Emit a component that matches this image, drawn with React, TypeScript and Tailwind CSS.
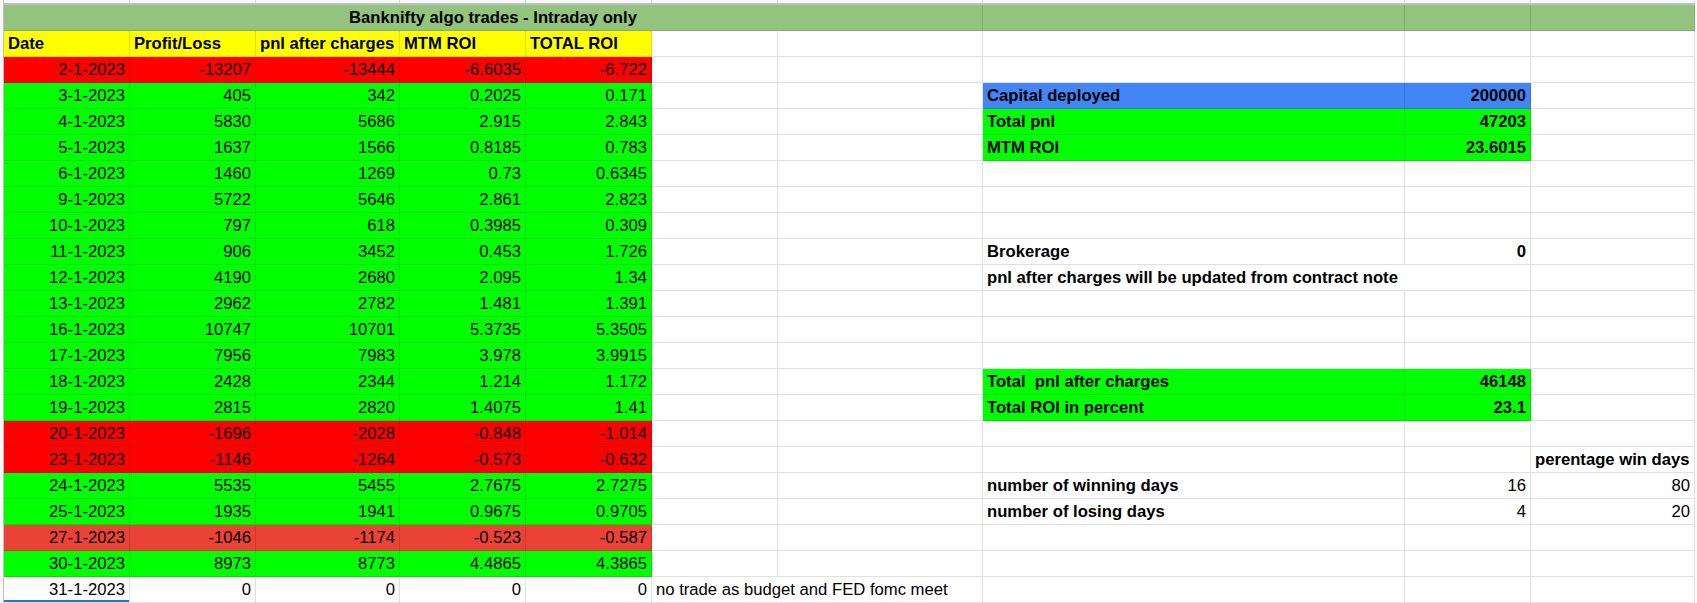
import React from 'react';

type Trade = [string, string, string, string, string, string];

const fills: { [key: string]: string } = {
  red: 'bg-[#ff0000]',
  green: 'bg-[#00ff00]',
  loss: 'bg-[#ea4335]',
  none: '',
};

const trades: Trade[] = [
  ['2-1-2023', '-13207', '-13444', '-6.6035', '-6.722', 'red'],
  ['3-1-2023', '405', '342', '0.2025', '0.171', 'green'],
  ['4-1-2023', '5830', '5686', '2.915', '2.843', 'green'],
  ['5-1-2023', '1637', '1566', '0.8185', '0.783', 'green'],
  ['6-1-2023', '1460', '1269', '0.73', '0.6345', 'green'],
  ['9-1-2023', '5722', '5646', '2.861', '2.823', 'green'],
  ['10-1-2023', '797', '618', '0.3985', '0.309', 'green'],
  ['11-1-2023', '906', '3452', '0.453', '1.726', 'green'],
  ['12-1-2023', '4190', '2680', '2.095', '1.34', 'green'],
  ['13-1-2023', '2962', '2782', '1.481', '1.391', 'green'],
  ['16-1-2023', '10747', '10701', '5.3735', '5.3505', 'green'],
  ['17-1-2023', '7956', '7983', '3.978', '3.9915', 'green'],
  ['18-1-2023', '2428', '2344', '1.214', '1.172', 'green'],
  ['19-1-2023', '2815', '2820', '1.4075', '1.41', 'green'],
  ['20-1-2023', '-1696', '-2028', '-0.848', '-1.014', 'red'],
  ['23-1-2023', '-1146', '-1264', '-0.573', '-0.632', 'red'],
  ['24-1-2023', '5535', '5455', '2.7675', '2.7275', 'green'],
  ['25-1-2023', '1935', '1941', '0.9675', '0.9705', 'green'],
  ['27-1-2023', '-1046', '-1174', '-0.523', '-0.587', 'loss'],
  ['30-1-2023', '8973', '8773', '4.4865', '4.3865', 'green'],
  ['31-1-2023', '0', '0', '0', '0', 'none'],
];

// summary block on the right, keyed by trade row index
type Side = { f?: string; h?: string; i?: string; j?: string; fill?: string; bold?: boolean; open?: boolean };

const side: { [key: number]: Side } = {
  1: { h: 'Capital deployed', i: '200000', fill: 'bg-[#4285f4]', bold: true },
  2: { h: 'Total pnl', i: '47203', fill: 'bg-[#00ff00]', bold: true },
  3: { h: 'MTM ROI', i: '23.6015', fill: 'bg-[#00ff00]', bold: true },
  7: { h: 'Brokerage', i: '0', bold: true },
  8: { h: 'pnl after charges will be updated from contract note', open: true },
  12: { h: 'Total  pnl after charges', i: '46148', fill: 'bg-[#00ff00]', bold: true },
  13: { h: 'Total ROI in percent', i: '23.1', fill: 'bg-[#00ff00]', bold: true },
  15: { j: 'perentage win days' },
  16: { h: 'number of winning days', i: '16', j: '80' },
  17: { h: 'number of losing days', i: '4', j: '20' },
  20: { f: 'no trade as budget and FED fomc meet' },
};

const cols = 'grid grid-cols-[126px_126px_144px_126px_126px_126px_205px_422px_126px_164px]';

function Cell({ className = '', children }: { className?: string; children?: React.ReactNode }) {
  return (
    <div className={`h-[26px] border-b border-r border-black/[0.12] px-[4px] leading-[25px] whitespace-pre ${className}`}>
      {children}
    </div>
  );
}

export default function App() {
  return (
    <div className="flex h-[603px] w-[1697px] overflow-hidden bg-white font-['Liberation_Sans',Arial,sans-serif] text-[16.67px] text-black">
      <div className="w-[4px] shrink-0 border-r border-[#c0c0c0] bg-[#f8f9fa]" />
      <div className="flex flex-col">
        <div className={`${cols} h-[6px] border-b-2 border-[#c0c0c0] bg-[#f8f9fa]`}>
          {Array.from({ length: 10 }).map((_, i) => (
            <div key={i} className="border-r border-[#dadce0]" />
          ))}
        </div>

        <div className={cols}>
          <Cell className="col-span-7 bg-[#93c47d] text-center font-bold">Banknifty algo trades - Intraday only</Cell>
          <Cell className="bg-[#93c47d]" />
          <Cell className="bg-[#93c47d]" />
          <Cell className="bg-[#93c47d]" />
        </div>

        <div className={cols}>
          {['Date', 'Profit/Loss', 'pnl after charges', 'MTM ROI', 'TOTAL ROI'].map(h => (
            <Cell key={h} className="bg-[#ffff00] font-bold">{h}</Cell>
          ))}
          <Cell />
          <Cell />
          <Cell />
          <Cell />
          <Cell />
        </div>

        {trades.map((t, idx) => {
          const s = side[idx] || {};
          const fill = fills[t[5]];
          const weight = s.bold ? 'font-bold' : '';
          return (
            <div key={t[0]} className={cols}>
              <Cell className={`text-right ${fill} ${idx === 20 ? 'shadow-[inset_0_-2px_0_#1a73e8]' : ''}`}>{t[0]}</Cell>
              <Cell className={`text-right ${fill}`}>{t[1]}</Cell>
              <Cell className={`text-right ${fill}`}>{t[2]}</Cell>
              <Cell className={`text-right ${fill}`}>{t[3]}</Cell>
              <Cell className={`text-right ${fill}`}>{t[4]}</Cell>
              <Cell className={s.f ? 'border-r-transparent' : ''}>{s.f}</Cell>
              <Cell />
              <Cell className={`font-bold ${s.fill || ''} ${s.open ? 'border-r-transparent' : ''}`}>{s.h}</Cell>
              <Cell className={`text-right ${weight} ${s.fill || ''}`}>{s.i}</Cell>
              <Cell className={s.j && !s.i ? 'font-bold' : 'text-right'}>{s.j}</Cell>
            </div>
          );
        })}
      </div>
    </div>
  );
}
